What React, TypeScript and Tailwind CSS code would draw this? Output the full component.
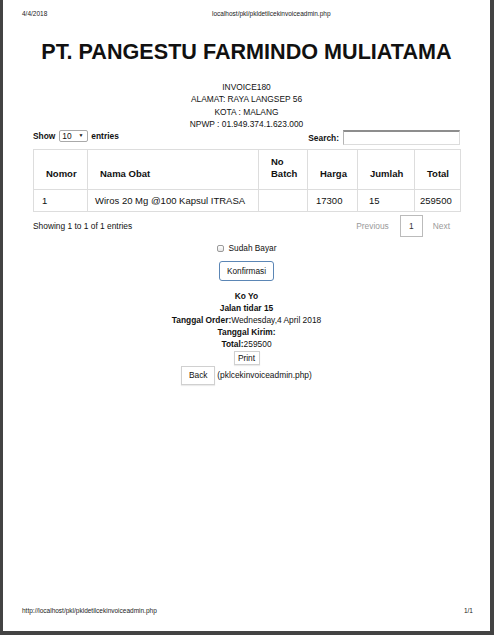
import React from 'react';

const rows = [
  { no: '1', nama: 'Wiros 20 Mg @100 Kapsul ITRASA', batch: '', harga: '17300', jumlah: '15', total: '259500' },
];

export default function App() {
  return (
    <div className="flex h-[635px] w-[494px] flex-col border-l-[3px] border-r-[4px] border-b-[4px] border-[#434343] bg-white font-['Liberation_Sans',Arial,sans-serif] text-[#111]">
      {/* print header */}
      <div className="flex pl-[19px] pt-[10px] text-[6.5px] leading-[8px] text-[#222]">
        <span className="w-[25px]">4/4/2018</span>
        <span className="ml-[165px]">localhost/pkl/pkldetilcekinvoiceadmin.php</span>
      </div>

      <h1 className="mt-[22px] text-center text-[21.6px] font-bold leading-[24px]">PT. PANGESTU FARMINDO MULIATAMA</h1>

      <div className="mt-[17px] text-center text-[8.4px] leading-[12.3px]">
        <p>INVOICE180</p>
        <p>ALAMAT: RAYA LANGSEP 56</p>
        <p>KOTA : MALANG</p>
        <p>NPWP : 01.949.374.1.623.000</p>
      </div>

      <div className="px-[30px]">
        <div className="flex items-start justify-between">
          <div className="flex h-[12px] items-center text-[8.4px] font-bold">
            <span>Show</span>
            <span className="ml-[4px] flex h-[12px] w-[29px] items-center justify-between rounded-[2px] border border-[#a9a9a9] bg-white pl-[2px] pr-[4px] font-normal">
              <span>10</span>
              <span className="text-[5px]">▼</span>
            </span>
            <span className="ml-[3px]">entries</span>
          </div>
          <div className="flex items-center text-[8.4px] font-bold">
            <span className="mt-[2px]">Search:</span>
            <span className="ml-[4px] h-[15px] w-[117px] border-t-2 border-r border-b border-l border-t-[#8d8d8d] border-l-[#b5b5b5] border-r-[#dcdcdc] border-b-[#dcdcdc] bg-white" />
          </div>
        </div>

        <table className="mt-[4px] w-full table-fixed border-collapse border border-[#ddd] text-[9.5px]">
          <colgroup>
            <col className="w-[54px]" />
            <col className="w-[171px]" />
            <col className="w-[49px]" />
            <col className="w-[50px]" />
            <col className="w-[57px]" />
            <col className="w-[46px]" />
          </colgroup>
          <thead>
            <tr className="h-[40px]">
              {['Nomor', 'Nama Obat', 'No Batch', 'Harga', 'Jumlah', 'Total'].map((h) => (
                <th
                  key={h}
                  className="border border-[#ddd] pb-[9px] pl-[12px] text-left align-bottom font-bold leading-[12px]"
                >
                  {h === 'No Batch' ? (
                    <>
                      No
                      <br />
                      Batch
                    </>
                  ) : (
                    h
                  )}
                </th>
              ))}
            </tr>
          </thead>
          <tbody>
            {rows.map((r) => (
              <tr key={r.no} className="h-[22px]">
                <td className="border border-[#ddd] pl-[8px]">{r.no}</td>
                <td className="border border-[#ddd] pl-[7px]">{r.nama}</td>
                <td className="border border-[#ddd] pl-[8px]">{r.batch}</td>
                <td className="border border-[#ddd] pl-[8px]">{r.harga}</td>
                <td className="border border-[#ddd] pl-[11px]">{r.jumlah}</td>
                <td className="border border-[#ddd] pl-[5px]">{r.total}</td>
              </tr>
            ))}
          </tbody>
        </table>

        <div className="mt-[3px] flex h-[22px] items-center justify-between text-[8.4px]">
          <span>Showing 1 to 1 of 1 entries</span>
          <div className="flex items-center pr-[10px] text-[#9a9a9a]">
            <span>Previous</span>
            <span className="ml-[11px] flex h-[22px] w-[23px] items-center justify-center border border-[#bbb] text-[#333]">1</span>
            <span className="ml-[10px]">Next</span>
          </div>
        </div>
      </div>

      <div className="mt-[5px] flex h-[12px] items-center justify-center text-[8.3px]">
        <span className="h-[7px] w-[7px] rounded-[2px] border border-[#9a9a9a] bg-gradient-to-b from-white to-[#e6e6e6]" />
        <span className="ml-[5px]">Sudah Bayar</span>
      </div>

      <div className="mt-[7px] flex justify-center">
        <button
          type="button"
          className="flex h-[20px] w-[55px] items-center justify-center rounded-[3px] border border-[#5b86b5] bg-white text-[8.3px] text-[#111]"
        >
          Konfirmasi
        </button>
      </div>

      <div className="mt-[9px] text-center text-[8.4px] font-bold leading-[12px]">
        <p>Ko Yo</p>
        <p>Jalan tidar 15</p>
        <p>
          Tanggal Order:<span className="font-normal">Wednesday,4 April 2018</span>
        </p>
        <p>Tanggal Kirim:</p>
        <p>
          Total:<span className="font-normal">259500</span>
        </p>
      </div>

      <div className="mt-[1px] flex justify-center">
        <button
          type="button"
          className="flex h-[14px] w-[26px] items-center justify-center border border-[#d0d0d0] bg-white text-[8.4px] shadow-[0_1px_1px_rgba(0,0,0,0.08)]"
        >
          Print
        </button>
      </div>

      <div className="mt-[1px] flex items-center justify-center text-[8.4px]">
        <button
          type="button"
          className="flex h-[19px] w-[34px] items-center justify-center border border-[#d0d0d0] bg-white text-[8.4px] shadow-[0_1px_1px_rgba(0,0,0,0.08)]"
        >
          Back
        </button>
        <span className="ml-[2px]">(pklcekinvoiceadmin.php)</span>
      </div>

      {/* print footer */}
      <div className="mt-auto flex justify-between pb-[16px] pl-[19px] pr-[17px] text-[6.5px] leading-[8px] text-[#222]">
        <span>http://localhost/pkl/pkldetilcekinvoiceadmin.php</span>
        <span>1/1</span>
      </div>
    </div>
  );
}
